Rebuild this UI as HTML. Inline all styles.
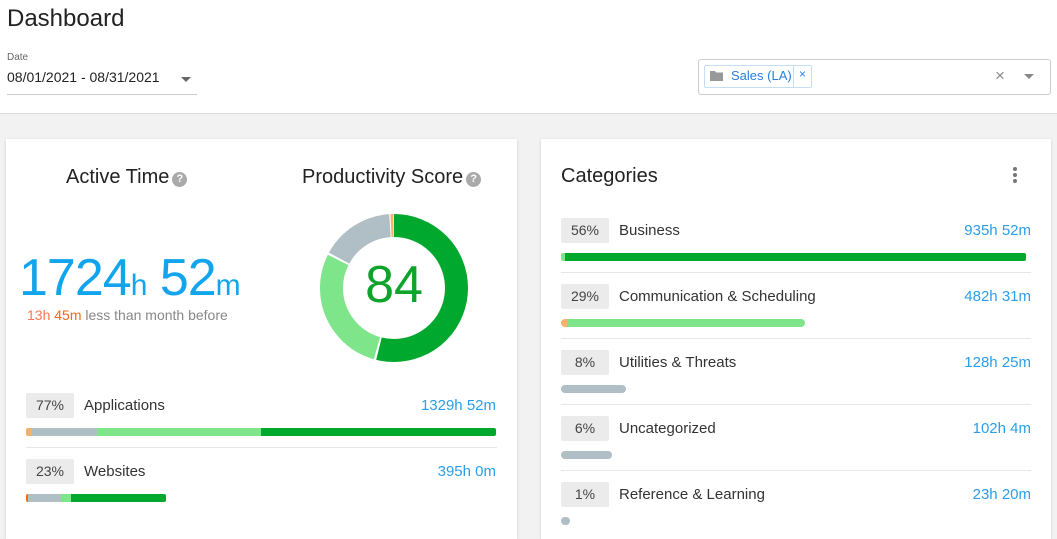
<!DOCTYPE html>
<html><head><meta charset="utf-8"><style>
*{margin:0;padding:0;box-sizing:border-box}
body{width:1057px;height:529px;overflow:hidden;background:#f2f2f2;font-family:"Liberation Sans",Arial,sans-serif;position:relative}
.a{position:absolute}
.top{left:0;top:0;width:1057px;height:114px;background:#fff;border-bottom:1px solid #ddd}
.card{background:#fff;box-shadow:0 1px 3px rgba(0,0,0,.15)}
.pill{position:absolute;width:48px;height:25px;background:#ebebeb;border-radius:2px;font-size:14px;color:#444;text-align:center;line-height:25px}
.lbl{position:absolute;font-size:15px;color:#333;line-height:25px}
.val{position:absolute;font-size:15px;color:#2a9ee8;line-height:25px;text-align:right}
.bar{position:absolute;height:8px;border-radius:2px;overflow:hidden;display:flex}
.div{position:absolute;height:1px;background:#e6e6e6}
.q{display:inline-block;width:15px;height:15px;border-radius:50%;background:#aaa;color:#fff;font-size:11px;line-height:15px;text-align:center;font-weight:bold;vertical-align:1px;margin-left:3px}
</style></head><body>
<div class="a top"></div>
<div class="a" style="left:7px;top:5px;font-size:24px;color:#222">Dashboard</div>
<div class="a" style="left:7px;top:52px;font-size:10px;color:#666">Date</div>
<div class="a" style="left:7px;top:69px;font-size:14px;color:#222">08/01/2021 - 08/31/2021</div>
<div class="a" style="left:181px;top:77px;width:0;height:0;border-left:5px solid transparent;border-right:5px solid transparent;border-top:5px solid #666"></div>
<div class="a" style="left:7px;top:94px;width:190px;height:1px;background:#ccc"></div>
<div class="a" style="left:698px;top:59px;width:353px;height:36px;border:1px solid #ccc;border-radius:3px"></div>
<div class="a" style="left:704px;top:65px;width:108px;height:23px;border:1px solid #c6def5;border-radius:2px"></div>
<div class="a" style="left:793px;top:65px;width:1px;height:23px;background:#c6def5"></div>
<svg class="a" style="left:710px;top:70px" width="13" height="11" viewBox="0 0 13 11"><path d="M0 1h5l1 1.5h7V11H0z" fill="#999"/></svg>
<div class="a" style="left:731px;top:68px;font-size:13px;color:#2a7de1">Sales (LA)</div>
<div class="a" style="left:799px;top:67px;font-size:12px;color:#2a7de1">×</div>
<div class="a" style="left:995px;top:66px;font-size:17px;color:#888">×</div>
<div class="a" style="left:1024px;top:74px;width:0;height:0;border-left:5px solid transparent;border-right:5px solid transparent;border-top:5px solid #888"></div>

<div class="a card" style="left:6px;top:139px;width:511px;height:400px"></div>
<div class="a card" style="left:541px;top:139px;width:510px;height:400px"></div>

<div class="a" style="left:66px;top:166px;font-size:20px;color:#222">Active Time<span class="q">?</span></div>
<div class="a" style="left:302px;top:166px;font-size:20px;color:#222">Productivity Score<span class="q">?</span></div>
<div class="a" style="left:19px;top:248px;color:#12a5ee;font-size:52px;line-height:60px;letter-spacing:-1px">1724<span style="font-size:30px">h</span> 52<span style="font-size:30px">m</span></div>
<div class="a" style="left:27px;top:307px;font-size:14px;color:#888"><span style="color:#f97b4f">13h</span> <span style="color:#f46a14">45m</span> less than month before</div>

<svg class="a" style="left:319px;top:213px" width="150" height="150" viewBox="0 0 150 150">
<g transform="rotate(-90 75 75)" fill="none" stroke-width="23">
<circle cx="75" cy="75" r="62.5" stroke="#00a82d" stroke-dasharray="211.5 400" stroke-dashoffset="0"/>
<circle cx="75" cy="75" r="62.5" stroke="#7fe58a" stroke-dasharray="110 400" stroke-dashoffset="-213.5"/>
<circle cx="75" cy="75" r="62.5" stroke="#b0bec5" stroke-dasharray="63 400" stroke-dashoffset="-325.5"/>
<circle cx="75" cy="75" r="62.5" stroke="#f6b26b" stroke-dasharray="2.5 400" stroke-dashoffset="-389.5"/>
</g></svg>
<div class="a" style="left:344px;top:255px;width:100px;text-align:center;font-size:52px;color:#0fa32c;line-height:60px">84</div>

<div class="pill" style="left:26px;top:393px">77%</div>
<div class="lbl" style="left:84px;top:393px">Applications</div>
<div class="val" style="left:380px;top:393px;width:116px">1329h 52m</div>
<div class="bar" style="left:26px;top:428px;width:470px"><i style="width:5px;background:#f6b26b"></i><i style="width:66px;background:#b0bec5"></i><i style="width:164px;background:#7fe58a"></i><i style="flex:1;background:#00a82d"></i></div>
<div class="div" style="left:26px;top:447px;width:471px"></div>
<div class="pill" style="left:26px;top:459px">23%</div>
<div class="lbl" style="left:84px;top:459px">Websites</div>
<div class="val" style="left:380px;top:459px;width:116px">395h 0m</div>
<div class="bar" style="left:26px;top:494px;width:140px"><i style="width:2px;background:#f46a14"></i><i style="width:33px;background:#b0bec5"></i><i style="width:10px;background:#7fe58a"></i><i style="flex:1;background:#00a82d"></i></div>

<div class="a" style="left:561px;top:165px;font-size:20px;color:#222">Categories</div>
<svg class="a" style="left:1011px;top:166px" width="8" height="20"><circle cx="4" cy="3" r="2" fill="#777"/><circle cx="4" cy="9" r="2" fill="#777"/><circle cx="4" cy="15" r="2" fill="#777"/></svg>

<div class="pill" style="left:561px;top:218px">56%</div><div class="lbl" style="left:619px;top:218px">Business</div><div class="val" style="left:900px;top:218px;width:131px">935h 52m</div>
<div class="bar" style="left:561px;top:253px;width:465px"><i style="width:4px;background:#7fe58a"></i><i style="flex:1;background:#00a82d"></i></div>
<div class="div" style="left:561px;top:272px;width:470px"></div>

<div class="pill" style="left:561px;top:284px">29%</div><div class="lbl" style="left:619px;top:284px">Communication &amp; Scheduling</div><div class="val" style="left:900px;top:284px;width:131px">482h 31m</div>
<div class="bar" style="left:561px;top:319px;width:244px;border-radius:4px"><i style="width:7px;background:#f6b26b"></i><i style="flex:1;background:#7fe58a"></i></div>
<div class="div" style="left:561px;top:338px;width:470px"></div>

<div class="pill" style="left:561px;top:350px">8%</div><div class="lbl" style="left:619px;top:350px">Utilities &amp; Threats</div><div class="val" style="left:900px;top:350px;width:131px">128h 25m</div>
<div class="bar" style="left:561px;top:385px;width:65px;background:#b0bec5;border-radius:4px"></div>
<div class="div" style="left:561px;top:404px;width:470px"></div>

<div class="pill" style="left:561px;top:416px">6%</div><div class="lbl" style="left:619px;top:416px">Uncategorized</div><div class="val" style="left:900px;top:416px;width:131px">102h 4m</div>
<div class="bar" style="left:561px;top:451px;width:51px;background:#b0bec5;border-radius:4px"></div>
<div class="div" style="left:561px;top:470px;width:470px"></div>

<div class="pill" style="left:561px;top:482px">1%</div><div class="lbl" style="left:619px;top:482px">Reference &amp; Learning</div><div class="val" style="left:900px;top:482px;width:131px">23h 20m</div>
<div class="bar" style="left:561px;top:517px;width:9px;background:#b0bec5;border-radius:4px"></div>
</body></html>
